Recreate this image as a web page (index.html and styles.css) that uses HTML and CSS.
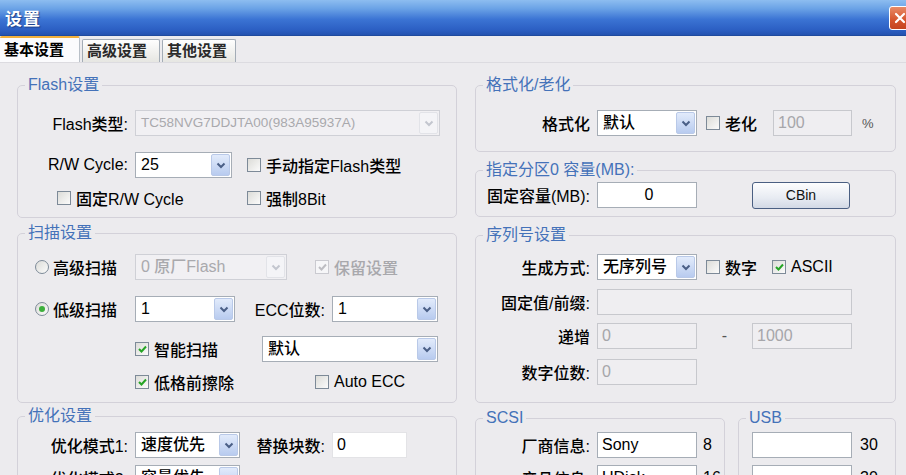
FILE: index.html
```html
<!DOCTYPE html>
<html lang="zh-CN">
<head>
    <meta charset="UTF-8">
    <title>设置</title>
    <link rel="stylesheet" href="styles.css">
</head>
<body>

<div class="window">
    <!-- Title bar -->
    <div class="titlebar">
        <span class="title">设置</span>
        <span class="close">
            <svg width="12" height="12" viewBox="0 0 12 12"><path d="M2 2 L10 10 M10 2 L2 10" stroke="#fff" stroke-width="2.2" stroke-linecap="round"/></svg>
        </span>
    </div>

    <!-- Tabs -->
    <div class="tabs">
        <div class="tab active">基本设置</div>
        <div class="tab t2">高级设置</div>
        <div class="tab t3">其他设置</div>
    </div>

    <div class="panel">
        <!-- Left column -->
        <div class="col col-left">
            <fieldset class="grp g-flash">
                <legend>Flash设置</legend>
                <div class="row mt16">
                    <span class="lbl w110">Flash类型:</span>
                    <div class="combo off w305"><span class="val small">TC58NVG7DDJTA00(983A95937A)</span><span class="drop"><svg width="10" height="7" viewBox="0 0 10 7"><path d="M1.5 1.5 L5 5 L8.5 1.5" fill="none" stroke-width="2"/></svg></span></div>
                </div>
                <div class="row mt16">
                    <span class="lbl w110">R/W Cycle:</span>
                    <div class="combo w97"><span class="val">25</span><span class="drop"><svg width="10" height="7" viewBox="0 0 10 7"><path d="M1.5 1.5 L5 5 L8.5 1.5" fill="none" stroke-width="2"/></svg></span></div>
                    <label class="chk ml15"><span class="cb"></span>手动指定Flash类型</label>
                </div>
                <div class="row mt7 pl39">
                    <label class="chk w190"><span class="cb"></span>固定R/W Cycle</label>
                    <label class="chk"><span class="cb"></span>强制8Bit</label>
                </div>
            </fieldset>

            <fieldset class="grp g-scan">
                <legend>扫描设置</legend>
                <div class="row mt12 pl17">
                    <label class="rad w100"><span class="rb"></span>高级扫描</label>
                    <div class="combo off w152"><span class="val">0 原厂Flash</span><span class="drop"><svg width="10" height="7" viewBox="0 0 10 7"><path d="M1.5 1.5 L5 5 L8.5 1.5" fill="none" stroke-width="2"/></svg></span></div>
                    <label class="chk off ml28"><span class="cb on"><svg width="9" height="8" viewBox="0 0 9 8"><path d="M1 4 L3.5 6.5 L8 1.5" fill="none" stroke-width="2"/></svg></span>保留设置</label>
                </div>
                <div class="row mt16 pl17">
                    <label class="rad w100"><span class="rb on"></span>低级扫描</label>
                    <div class="combo w100"><span class="val">1</span><span class="drop"><svg width="10" height="7" viewBox="0 0 10 7"><path d="M1.5 1.5 L5 5 L8.5 1.5" fill="none" stroke-width="2"/></svg></span></div>
                    <span class="lbl w93">ECC位数:</span>
                    <div class="combo w106"><span class="val">1</span><span class="drop"><svg width="10" height="7" viewBox="0 0 10 7"><path d="M1.5 1.5 L5 5 L8.5 1.5" fill="none" stroke-width="2"/></svg></span></div>
                </div>
                <div class="row mt14 pl117">
                    <label class="chk w127"><span class="cb on"><svg width="9" height="8" viewBox="0 0 9 8"><path d="M1 4 L3.5 6.5 L8 1.5" fill="none" stroke-width="2"/></svg></span>智能扫描</label>
                    <div class="combo w176"><span class="val">默认</span><span class="drop"><svg width="10" height="7" viewBox="0 0 10 7"><path d="M1.5 1.5 L5 5 L8.5 1.5" fill="none" stroke-width="2"/></svg></span></div>
                </div>
                <div class="row mt7 pl117">
                    <label class="chk w180"><span class="cb on"><svg width="9" height="8" viewBox="0 0 9 8"><path d="M1 4 L3.5 6.5 L8 1.5" fill="none" stroke-width="2"/></svg></span>低格前擦除</label>
                    <label class="chk"><span class="cb"></span>Auto ECC</label>
                </div>
            </fieldset>

            <fieldset class="grp g-opt">
                <legend>优化设置</legend>
                <div class="row mt7">
                    <span class="lbl w110">优化模式1:</span>
                    <div class="combo w105"><span class="val">速度优先</span><span class="drop"><svg width="10" height="7" viewBox="0 0 10 7"><path d="M1.5 1.5 L5 5 L8.5 1.5" fill="none" stroke-width="2"/></svg></span></div>
                    <span class="lbl w88">替换块数:</span>
                    <div class="edit w75 faint">0</div>
                </div>
                <div class="row mt7">
                    <span class="lbl w110">优化模式2:</span>
                    <div class="combo w105"><span class="val">容量优先</span><span class="drop"><svg width="10" height="7" viewBox="0 0 10 7"><path d="M1.5 1.5 L5 5 L8.5 1.5" fill="none" stroke-width="2"/></svg></span></div>
                </div>
            </fieldset>
        </div>

        <!-- Right column -->
        <div class="col col-right">
            <fieldset class="grp g-fmt">
                <legend>格式化/老化</legend>
                <div class="row mt16">
                    <span class="lbl w114">格式化</span>
                    <div class="combo w100"><span class="val">默认</span><span class="drop"><svg width="10" height="7" viewBox="0 0 10 7"><path d="M1.5 1.5 L5 5 L8.5 1.5" fill="none" stroke-width="2"/></svg></span></div>
                    <label class="chk ml9 w67"><span class="cb"></span>老化</label>
                    <div class="edit off w79">100</div>
                    <span class="ml10 unit">%</span>
                </div>
            </fieldset>

            <fieldset class="grp g-part">
                <legend>指定分区0 容量(MB):</legend>
                <div class="row mt3">
                    <span class="lbl w114">固定容量(MB):</span>
                    <div class="edit w100 center">0</div>
                    <button class="btn">CBin</button>
                </div>
            </fieldset>

            <fieldset class="grp g-sn">
                <legend>序列号设置</legend>
                <div class="row mt10">
                    <span class="lbl w114">生成方式:</span>
                    <div class="combo w100"><span class="val">无序列号</span><span class="drop"><svg width="10" height="7" viewBox="0 0 10 7"><path d="M1.5 1.5 L5 5 L8.5 1.5" fill="none" stroke-width="2"/></svg></span></div>
                    <label class="chk ml9 w66"><span class="cb"></span>数字</label>
                    <label class="chk"><span class="cb on"><svg width="9" height="8" viewBox="0 0 9 8"><path d="M1 4 L3.5 6.5 L8 1.5" fill="none" stroke-width="2"/></svg></span>ASCII</label>
                </div>
                <div class="row mt9">
                    <span class="lbl w114">固定值/前缀:</span>
                    <div class="edit off w255"></div>
                </div>
                <div class="row mt8">
                    <span class="lbl w114">递增</span>
                    <div class="edit off w100">0</div>
                    <span class="dash">-</span>
                    <div class="edit off w100">1000</div>
                </div>
                <div class="row mt10">
                    <span class="lbl w114">数字位数:</span>
                    <div class="edit off w100">0</div>
                </div>
            </fieldset>

            <div class="pair">
                <fieldset class="grp g-scsi">
                    <legend>SCSI</legend>
                    <div class="row mt5">
                        <span class="lbl w114">厂商信息:</span>
                        <div class="edit w100">Sony</div>
                        <span class="ml6">8</span>
                    </div>
                    <div class="row mt7">
                        <span class="lbl w114">产品信息:</span>
                        <div class="edit w100">UDisk</div>
                        <span class="ml6">16</span>
                    </div>
                </fieldset>
                <fieldset class="grp g-usb">
                    <legend>USB</legend>
                    <div class="row mt5 pl13">
                        <div class="edit w100"></div>
                        <span class="ml8">30</span>
                    </div>
                    <div class="row mt7 pl13">
                        <div class="edit w100"></div>
                        <span class="ml8">30</span>
                    </div>
                </fieldset>
            </div>
        </div>
    </div>
</div>

</body>
</html>
```

FILE: styles.css
```css
* {
    box-sizing: border-box;
}
body {
    margin: 0;
    font-family: "Liberation Sans", "Noto Sans CJK SC", sans-serif;
    font-size: 16px;
    font-weight: 500;
    color: #000;
    background: #ecebee;
    overflow: hidden;
}
.window {
    width: 906px;
    height: 475px;
    overflow: hidden;
    background: #ecebee;
}

/* title bar */
.titlebar {
    height: 36px;
    display: flex;
    align-items: center;
    justify-content: space-between;
    padding-left: 5px;
    overflow: hidden;
    background: linear-gradient(#8dbdf0 0%, #6aa2e6 25%, #3b74d4 55%, #2c5fc3 85%, #2452b0 100%);
    border-bottom: 1px solid #1f4a9e;
}
.title {
    color: #fff;
    font-weight: bold;
    font-size: 17px;
    letter-spacing: 1px;
    text-shadow: 1px 1px 1px #1d3f86;
}
.close {
    width: 22px;
    height: 24px;
    margin-right: -5px;
    display: flex;
    align-items: center;
    justify-content: center;
    border: 1px solid #fff;
    border-radius: 3px;
    background: linear-gradient(#e88a66, #d5542c 60%, #c44420);
}

/* tabs */
.tabs {
    height: 27px;
    display: flex;
    align-items: flex-end;
    gap: 2px;
    border-bottom: 1px solid #dcdbe0;
}
.tab {
    height: 23px;
    padding-left: 4px;
    white-space: nowrap;
    font-weight: bold;
    font-size: 15px;
    line-height: 21px;
    color: #2a2a2a;
    background: linear-gradient(#fefefe, #e6e6e2);
    border: 1px solid #a3acb6;
    border-bottom: none;
    border-radius: 2px 2px 0 0;
}
.tab.active {
    height: 26px;
    width: 80px;
    line-height: 23px;
    color: #000;
    background: #fbfbfd;
    border: none;
    border-top: 2px solid #f2b03c;
    border-right: 1px solid #b9c0c8;
}
.tab.t2 { width: 78px; }
.tab.t3 { width: 74px; }

/* content */
.panel {
    display: flex;
    gap: 18px;
    padding: 13px 0 0 17px;
}
.col-left { width: 440px; }
.col-right { width: 421px; }

.grp {
    margin: 0;
    padding: 0 0 6px;
    border: 1px solid #d3d1d9;
    border-radius: 5px;
    min-width: 0;
}
.grp legend {
    margin-left: 7px;
    padding: 0 3px;
    line-height: 18px;
    font-size: 16px;
    font-weight: 400;
    color: #4472b9;
}
.g-scan { margin-top: 6px; padding-bottom: 7px; }
.g-opt { margin-top: 4px; }
.g-fmt { padding-bottom: 15px; }
.g-part { margin-top: 9px; padding-bottom: 8px; }
.g-sn { margin-top: 9px; padding-bottom: 17px; }
.pair {
    display: flex;
    gap: 13px;
    margin-top: 6px;
}
.g-scsi { width: 250px; }
.g-usb { width: 158px; }

.row {
    display: flex;
    align-items: center;
    height: 26px;
    white-space: nowrap;
}
.mt3 { margin-top: 3px; }
.mt5 { margin-top: 5px; }
.mt7 { margin-top: 7px; }
.mt8 { margin-top: 8px; }
.mt9 { margin-top: 9px; }
.mt10 { margin-top: 10px; }
.mt12 { margin-top: 12px; }
.mt14 { margin-top: 14px; }
.mt16 { margin-top: 16px; }
.pl13 { padding-left: 13px; }
.pl17 { padding-left: 17px; }
.pl39 { padding-left: 39px; }
.pl117 { padding-left: 117px; }
.ml6 { margin-left: 6px; }
.ml8 { margin-left: 8px; }
.ml9 { margin-left: 9px; }
.ml10 { margin-left: 10px; }
.ml15 { margin-left: 15px; }
.ml28 { margin-left: 28px; }

.lbl {
    text-align: right;
    padding-right: 7px;
    flex-shrink: 0;
}
.w66 { width: 66px; }
.w67 { width: 67px; }
.w75 { width: 75px; }
.w79 { width: 79px; }
.w88 { width: 92px; }
.w93 { width: 97px; }
.w97 { width: 97px; }
.w100 { width: 100px; }
.w105 { width: 105px; }
.w106 { width: 106px; }
.w110 { width: 117px; }
.w114 { width: 121px; }
.w127 { width: 127px; }
.w152 { width: 152px; }
.w176 { width: 176px; }
.w180 { width: 180px; }
.w190 { width: 190px; }
.w255 { width: 255px; }
.w305 { width: 305px; }

/* combo box */
.combo {
    display: flex;
    height: 26px;
    flex-shrink: 0;
    border: 1px solid #a6adb6;
    background: #fff;
}
.combo .val {
    flex: 1;
    padding-left: 5px;
    line-height: 24px;
    overflow: hidden;
}
.combo .val.small {
    font-size: 13.5px;
}
.combo .drop {
    width: 19px;
    margin: 1px;
    display: flex;
    align-items: center;
    justify-content: center;
    border: 1px solid #b9c9e8;
    border-radius: 2px;
    background: linear-gradient(#e2ebfb, #b8cbef);
}
.combo .drop path { stroke: #4a5f86; }
.combo.off {
    background: #f1f0f3;
    border-color: #cfd0d6;
    color: #a9a9ad;
}
.combo.off .drop {
    border-color: #e2e3e8;
    background: #f4f4f7;
}
.combo.off .drop path { stroke: #c3c6cf; }

/* edit box */
.edit {
    height: 26px;
    flex-shrink: 0;
    padding-left: 4px;
    line-height: 24px;
    border: 1px solid #a6adb6;
    background: #fff;
}
.edit.off {
    background: #efeef1;
    border-color: #c7c8cd;
    color: #a6a6aa;
}
.edit.center {
    text-align: center;
}
.edit.faint {
    border-color: #e3e3e6;
}
.dash {
    width: 55px;
    text-align: center;
    color: #555;
}
.unit {
    font-size: 13px;
    color: #555;
}

/* check boxes and radios */
.chk, .rad {
    display: flex;
    align-items: center;
    gap: 5px;
    flex-shrink: 0;
}
.rad { gap: 4px; }
.chk.off {
    color: #a8a8ac;
}
.cb {
    width: 14px;
    height: 14px;
    display: flex;
    align-items: center;
    justify-content: center;
    border: 1px solid #7d8a98;
    background: linear-gradient(135deg, #dcdcd8, #fbfbfb);
}
.cb path { stroke: #25a425; }
.chk.off .cb {
    border-color: #cacad0;
    background: #f6f6f8;
}
.chk.off .cb path { stroke: #bdbdc2; }
.rb {
    width: 14px;
    height: 14px;
    border: 1px solid #7d8a98;
    border-radius: 50%;
    background: linear-gradient(135deg, #dcdcd8, #fbfbfb);
    display: flex;
    align-items: center;
    justify-content: center;
}
.rb.on::after {
    content: "";
    width: 6px;
    height: 6px;
    border-radius: 50%;
    background: #3caf3c;
}

/* button */
.btn {
    width: 98px;
    height: 27px;
    margin-left: 55px;
    font-family: inherit;
    font-size: 14px;
    color: #111;
    border: 1px solid #4a5f82;
    border-radius: 3px;
    background: linear-gradient(#fdfdfe, #e7ebf2 60%, #d2d9e5);
}
```
